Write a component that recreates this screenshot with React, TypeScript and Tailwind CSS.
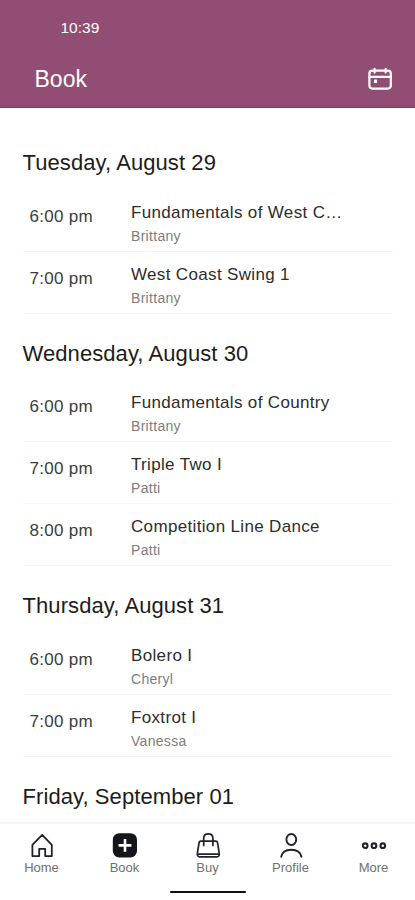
import React from "react";

type Lesson = { time: string; title: string; teacher: string };
type Day = { date: string; lessons: Lesson[] };

const days: Day[] = [
  {
    date: "Tuesday, August 29",
    lessons: [
      { time: "6:00 pm", title: "Fundamentals of West C…", teacher: "Brittany" },
      { time: "7:00 pm", title: "West Coast Swing 1", teacher: "Brittany" },
    ],
  },
  {
    date: "Wednesday, August 30",
    lessons: [
      { time: "6:00 pm", title: "Fundamentals of Country", teacher: "Brittany" },
      { time: "7:00 pm", title: "Triple Two I", teacher: "Patti" },
      { time: "8:00 pm", title: "Competition Line Dance", teacher: "Patti" },
    ],
  },
  {
    date: "Thursday, August 31",
    lessons: [
      { time: "6:00 pm", title: "Bolero I", teacher: "Cheryl" },
      { time: "7:00 pm", title: "Foxtrot I", teacher: "Vanessa" },
    ],
  },
  { date: "Friday, September 01", lessons: [] },
];

function CalendarIcon() {
  return (
    <svg width="26" height="24" viewBox="0 0 26 24" fill="none" stroke="#fff" strokeWidth="2.2" strokeLinecap="round">
      <rect x="2.4" y="3.6" width="21.4" height="18" rx="3" />
      <path d="M2.4 9.9H23.8M7.6 1.800v3.800M18.6 1.800v3.800" />
      <rect x="7" y="12.400" width="3" height="3.600" rx="0.500" fill="#fff" stroke="none" />
    </svg>
  );
}

function HomeIcon() {
  return (
    <svg width="26" height="26" viewBox="0 0 26 26" fill="none" stroke="#20222f" strokeWidth="1.8" strokeLinejoin="round">
      <path d="M3.400 12.800 13.200 2.800l9.600 10v11.300h-6.600v-7.300H10.200v7.300H3.400Z" />
    </svg>
  );
}

function BookIcon() {
  return (
    <svg width="26" height="26" viewBox="0 0 26 26">
      <rect x="0.8" y="1.2" width="24.2" height="24.2" rx="6.500" fill="#15161b" />
      <path d="M13 7v12.800M6.600 13.400h12.800" stroke="#fff" strokeWidth="2.6" />
    </svg>
  );
}

function BuyIcon() {
  return (
    <svg width="26" height="26" viewBox="0 0 26 26" fill="none" stroke="#20222f" strokeWidth="1.7" strokeLinecap="round" strokeLinejoin="round">
      <path d="M5.800 9.100h15q1.500 0 1.700 1.400l1.700 10.500q.5 3.800-2.400 3.800H4.800q-2.900 0-2.400-3.800L4.100 10.500q.2-1.400 1.700-1.400Z" />
      <path d="M8.700 13.400V6.400q0-4.600 4.600-4.600t4.600 4.600v7M2.700 22.200h21.200" />
    </svg>
  );
}

function ProfileIcon() {
  return (
    <svg width="26" height="26" viewBox="0 0 26 26" fill="none" stroke="#20222f" strokeWidth="1.9" strokeLinecap="round">
      <ellipse cx="13.300" cy="7.500" rx="4.900" ry="5.500" />
      <path d="M3.200 24.800C4.200 19.900 7.200 17.800 13.200 17.800s9.200 2.100 10.200 7" />
    </svg>
  );
}

function MoreIcon() {
  return (
    <svg width="26" height="26" viewBox="0 0 26 26" fill="none" stroke="#20222f" strokeWidth="2.1">
      <circle cx="4.200" cy="13.700" r="2.300" />
      <circle cx="13" cy="13.700" r="2.300" />
      <circle cx="21.800" cy="13.700" r="2.300" />
    </svg>
  );
}

const tabs = [
  { label: "Home", Icon: HomeIcon },
  { label: "Book", Icon: BookIcon },
  { label: "Buy", Icon: BuyIcon },
  { label: "Profile", Icon: ProfileIcon },
  { label: "More", Icon: MoreIcon },
];

export default function App() {
  return (
    <div className="flex h-[900px] w-full flex-col overflow-hidden bg-white font-['Liberation_Sans',Arial,sans-serif]">
      <header className="h-[108px] shrink-0 border-b border-[#7f3a63] bg-[#914d73] text-white">
        <div className="h-[56px] pt-[18px] pl-[60.5px] text-[15.5px] leading-5">10:39</div>
        <div className="flex h-[46px] items-center justify-between pr-[22px] pl-[34.5px]">
          <h1 className="text-[23px] leading-7">Book</h1>
          <CalendarIcon />
        </div>
      </header>

      <main className="min-h-0 flex-1 overflow-hidden pt-[14px] pr-[22px] pl-[22.5px]">
        {days.map((day) => (
          <section key={day.date}>
            <h2 className="h-[66.5px] pt-[26px] text-[22px] leading-[29px] tracking-[0.08px] text-[#1c1c1c]">{day.date}</h2>
            {day.lessons.map((lesson) => (
              <div key={lesson.time} className="flex h-[62px] shadow-[0_1px_0_#f4f4f4]">
                <div className="w-[108.5px] shrink-0 pt-[18px] pl-[7px] text-[17px] leading-5 tracking-[0.3px] text-[#3c3c3c]">
                  {lesson.time}
                </div>
                <div className="w-[230px] pt-[13px]">
                  <div className="text-[17px] leading-[22px] tracking-[0.34px] whitespace-nowrap text-[#2d2d2d]">{lesson.title}</div>
                  <div className="pt-1 text-sm leading-4 tracking-[0.3px] text-[#7d7d7d]">{lesson.teacher}</div>
                </div>
              </div>
            ))}
          </section>
        ))}
      </main>

      <nav className="flex h-[78px] shrink-0 flex-col items-center border-t-2 border-[#f6f6f6] bg-white">
        <div className="grid w-full grid-cols-5 pt-2">
          {tabs.map(({ label, Icon }) => (
            <div key={label} className="flex flex-col items-center">
              <Icon />
              <span className="pt-px text-[13px] leading-[18px] text-[#707070]">{label}</span>
            </div>
          ))}
        </div>
        <div className="mt-[14px] h-[2px] w-[76px] rounded-full bg-[#111]" />
      </nav>
    </div>
  );
}
